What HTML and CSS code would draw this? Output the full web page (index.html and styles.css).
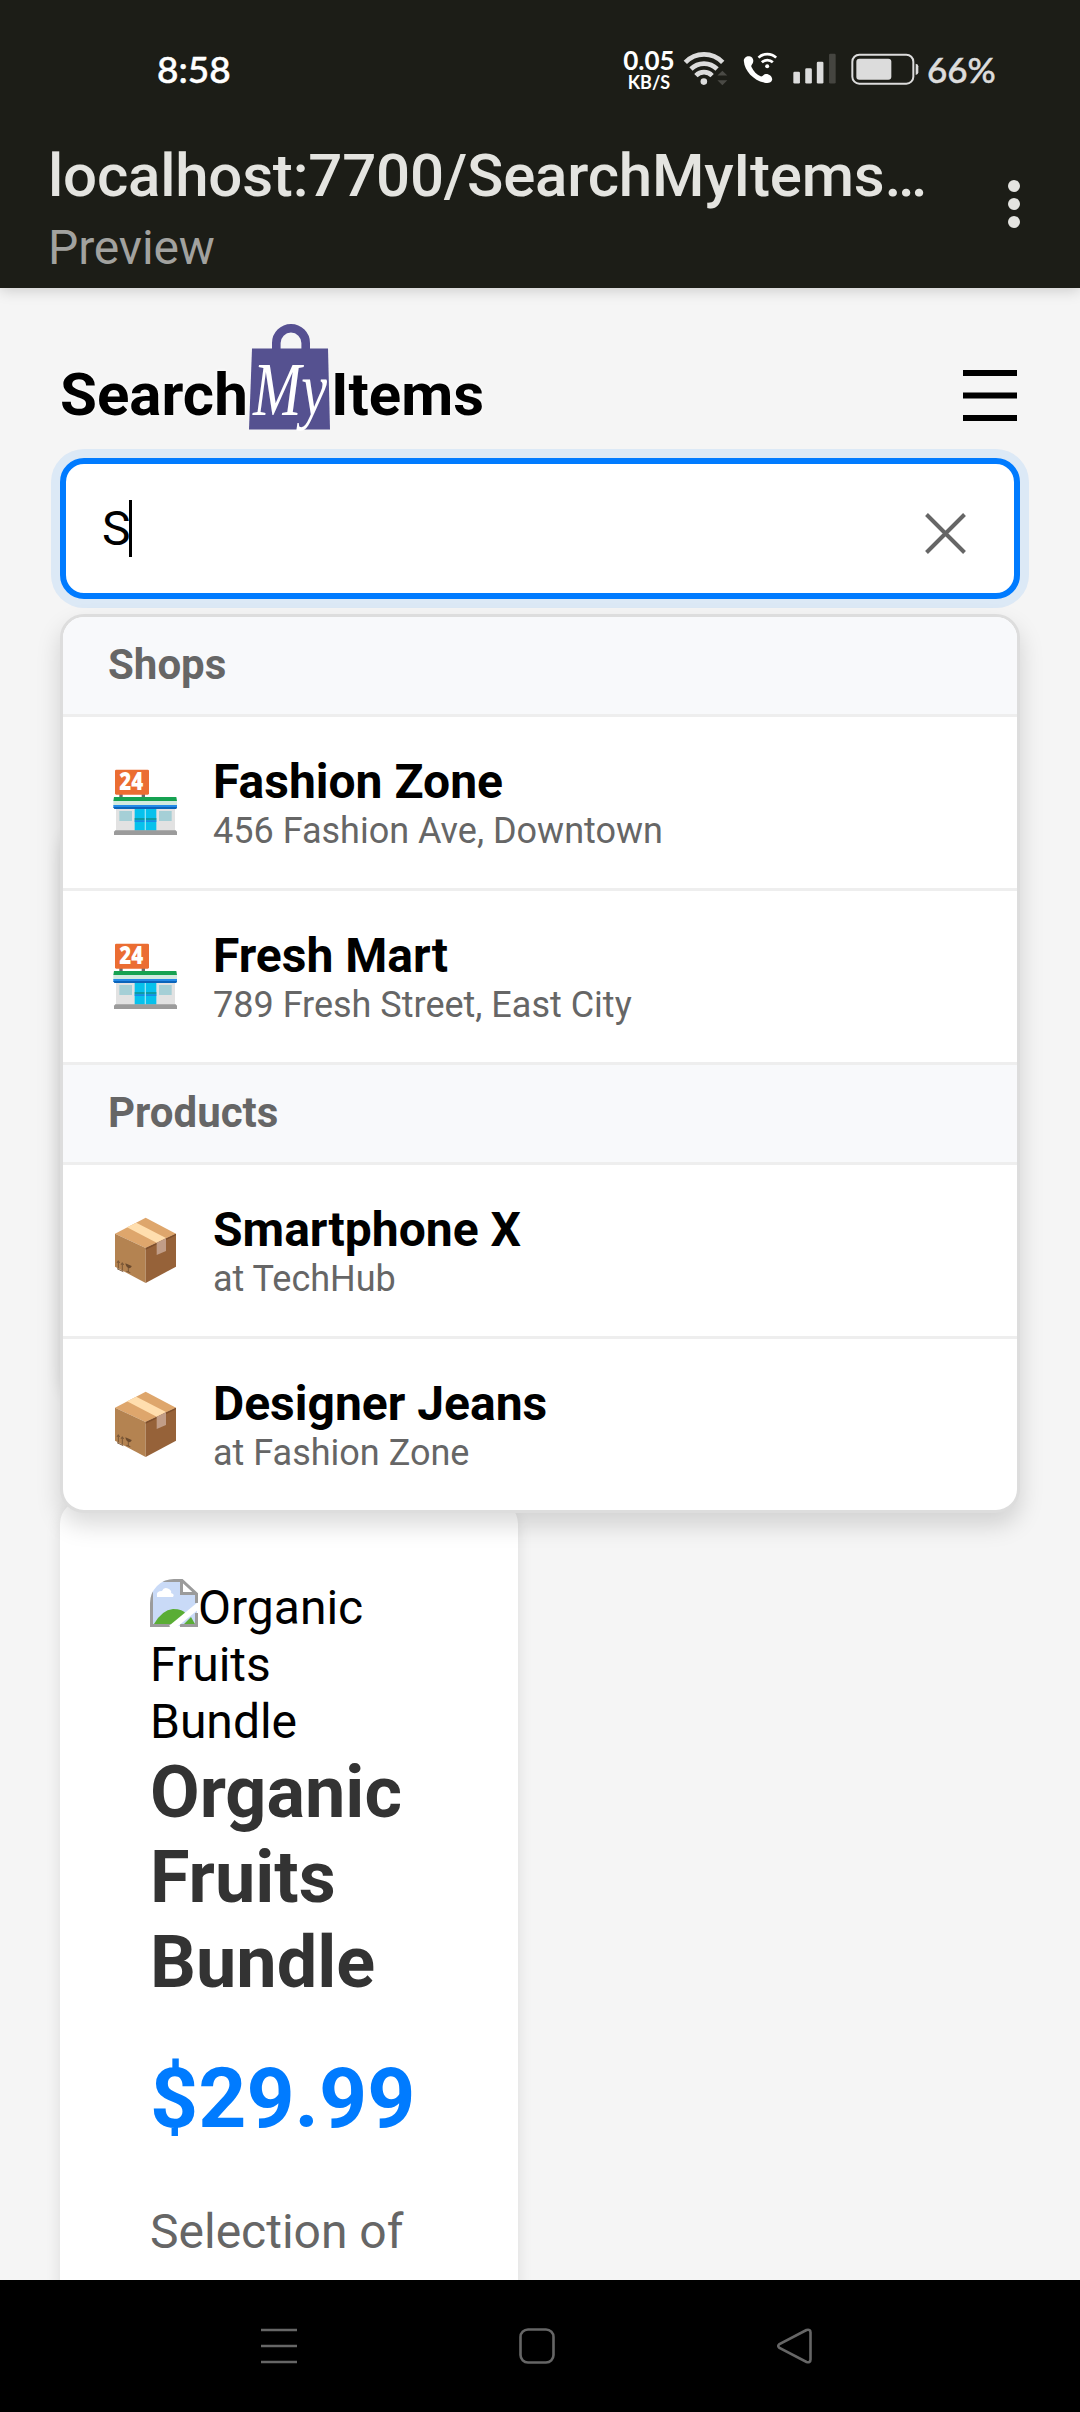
FILE: index.html
```html
<!DOCTYPE html>
<html lang="en">
<head>
<meta charset="utf-8">
<title>SearchMyItems</title>
<link rel="stylesheet" href="styles.css">
</head>
<body>
<svg class="defs" width="0" height="0" aria-hidden="true">
  <symbol id="store" viewBox="0 0 252 252">
    <path fill="#6b6b6b" d="M46 100h10v12H46zM113 100h10v12h-10z"/>
    <rect x="33" y="29" width="102" height="75" rx="4" fill="#eb6d32"/>
    <rect x="36" y="145" width="177" height="70" fill="#e2e2e2"/>
    <path fill="#a5cfd6" d="M46 153h38v30H46zM165 153h38v30h-38z"/>
    <path fill="#06c1ec" d="M92 146h65v66H92z"/>
    <path fill="#0e9ba5" d="M92 174h65v7H92z"/>
    <path fill="#188ce5" d="M92 181h65v5H92z"/>
    <path fill="#8fe4f7" d="M122 146h4v66h-4z"/>
    <path fill="#16a251" d="M30 111h187l2 12H28z"/>
    <path fill="#d3eadf" d="M28 123h191v14H28z"/>
    <path fill="#248be8" d="M28 135h191v9H28z"/>
    <path fill="#0b64ba" d="M28 141h191l-2 6H31z"/>
    <path fill="#9b9b9b" d="M34 211h181l4 4v10H30v-10z"/>
    <text x="46" y="91" class="sign" textLength="72" lengthAdjust="spacingAndGlyphs">24</text>
  </symbol>
  <symbol id="box" viewBox="0 0 252 252">
    <path fill="#dea66c" d="M125 35l91 48-91 43L33 83z"/>
    <path fill="#b48351" d="M33 83l92 43v105l-92-49z"/>
    <path fill="#966239" d="M216 83l-91 43v105l91-49z"/>
    <path fill="#7d4e2b" d="M125 126l91-43v5l-91 43z"/>
    <path fill="#ffdeae" d="M97 50l89 46-28 14L69 64z"/>
    <path fill="#c19d87" d="M186 97v38l-28 12v-37z"/>
    <path stroke="#7a5737" stroke-width="3" fill="none" d="M43 188v-23m-4 6l4-7 4 7M55 194v-23m-4 6l4-7 4 7M39 188l19 9M73 183v15m-6-2l12 4"/>
    <path fill="#6b4a2d" d="M64 172l19 8c-2 10-16 9-19-8z"/>
  </symbol>
</svg>

<header class="status">
  <span class="clock">8:58</span>
  <div class="speed"><span class="rate">0.05</span><span class="unit">KB/S</span></div>
  <svg class="wifi" viewBox="250 60 136 108">
    <g fill="none" stroke="#dcdcdc" stroke-width="14"><path d="M257 97A78 78 0 0 1 370 97M274 117A56 56 0 0 1 353 117M289 137A34 34 0 0 1 338 137"/></g>
    <circle cx="313" cy="155" r="10" fill="#dcdcdc"/>
    <path fill="#4a4a45" d="M369 122l15 15h-30zM369 166l15-15h-30z"/>
  </svg>
  <svg class="phone" viewBox="430 66 104 96">
    <path fill="#fff" d="M432 93C431 84 441 77 449 79C457 80 462 88 460 96C459 103 452 105 455 111C461 124 471 134 482 139C488 141 490 133 498 132C507 131 518 139 517 149C515 159 504 160 494 158C462 152 434 123 432 93Z"/>
    <g fill="none" stroke="#fff" stroke-width="8"><path d="M476 83A38 38 0 0 1 529 83M486 97A24 24 0 0 1 519 97"/></g>
    <circle cx="502" cy="109" r="6" fill="#fff"/>
  </svg>
  <svg class="signal" viewBox="579 70 130 93">
    <g fill="#dcdcdc"><rect x="580" y="126" width="20" height="36" rx="4"/><rect x="616" y="116" width="20" height="46" rx="4"/><rect x="651" y="96" width="20" height="66" rx="4"/></g>
    <rect x="688" y="72" width="20" height="90" rx="4" fill="#454540"/>
  </svg>
  <svg class="battery" viewBox="755 70 204 96">
    <rect x="759" y="75" width="183" height="87" rx="21" fill="none" stroke="#dcdcdc" stroke-width="6"/>
    <rect x="771" y="87" width="105" height="63" rx="9" fill="#dcdcdc"/>
    <path fill="#dcdcdc" d="M949 102q8 1 8 8v18q0 7-8 8z"/>
  </svg>
  <span class="percent">66%</span>
</header>

<div class="appbar">
  <div class="address">
    <div class="url">localhost:7700/SearchMyItems…</div>
    <div class="mode">Preview</div>
  </div>
  <svg class="more" viewBox="0 0 12 48"><g fill="#e4e4e0"><circle cx="6" cy="6" r="6"/><circle cx="6" cy="24" r="6"/><circle cx="6" cy="42" r="6"/></g></svg>
</div>

<main class="page">
  <div class="brandbar">
    <div class="brand">
      <span class="word search-word">Search</span>
      <svg class="bag" viewBox="0 0 82 106">
        <path fill="none" stroke="#565092" stroke-width="8.6" d="M27.300 26v-7a14.700 14.700 0 0 1 29.400 0v7"/>
        <path fill="#555190" d="M3 24.500h76l2 81H0z"/>
        <text x="4" y="91" class="my" textLength="74" lengthAdjust="spacingAndGlyphs">My</text>
      </svg>
      <span class="word">Items</span>
    </div>
    <svg class="menu" viewBox="0 0 54 52"><path d="M0 0h54v6H0zM0 22.500h54v6H0zM0 45h54v6H0z"/></svg>
  </div>

  <div class="searchbox">
    <span class="query">S</span><span class="caret"></span>
    <svg class="clear" viewBox="0 0 41 41"><path d="M1.500 1.500l38 38M39.500 1.500l-38 38" fill="none" stroke="#666" stroke-width="4"/></svg>
  </div>

  <div class="below">
    <section class="cards">
      <article class="card first"></article>
      <article class="card">
        <div class="photo"><svg class="broken" viewBox="0 0 48 48">
          <path fill="#c9daf7" d="M1 1h31v14h15v32H1z"/>
          <path fill="#fff" d="M7 17q-1-5 5-5 2-5 7-2 3 2 2 4 4 1 2 4H7z"/>
          <path fill="#5aad35" d="M4 45Q12 31 23 30q10 0 13 5l-15 11H4zM34 45l7-7 4 7z"/>
          <path fill="none" stroke="#9b9b9b" stroke-width="3" d="M1.500 48V1.500H32L46.500 15v9M31.500 1.500v13h15M0 46.500h21M30 46.500h16.500V34"/>
          <path stroke="#fff" stroke-width="6" d="M21 49L49 26"/>
        </svg>Organic<br>Fruits<br>Bundle</div>
        <h3 class="name">Organic<br>Fruits<br>Bundle</h3>
        <div class="price">$29.99</div>
        <p class="about">Selection of</p>
      </article>
    </section>

    <div class="suggestions">
      <div class="group">Shops</div>
      <div class="item"><svg class="emoji"><use href="#store"/></svg><div class="text"><div class="title">Fashion Zone</div><div class="sub">456 Fashion Ave, Downtown</div></div></div>
      <div class="item"><svg class="emoji"><use href="#store"/></svg><div class="text"><div class="title">Fresh Mart</div><div class="sub">789 Fresh Street, East City</div></div></div>
      <div class="group">Products</div>
      <div class="item"><svg class="emoji parcel"><use href="#box"/></svg><div class="text"><div class="title">Smartphone X</div><div class="sub">at TechHub</div></div></div>
      <div class="item"><svg class="emoji parcel"><use href="#box"/></svg><div class="text"><div class="title">Designer Jeans</div><div class="sub">at Fashion Zone</div></div></div>
    </div>
  </div>
</main>

<nav class="navbar">
  <svg class="recents" viewBox="0 0 36 36"><path d="M0 2h36M0 18h36M0 34h36"/></svg>
  <svg class="home" viewBox="0 0 36 36"><rect x="1.500" y="1.500" width="33" height="33" rx="7.500"/></svg>
  <svg class="back" viewBox="0 0 36 36"><path d="M29.500 2L2.500 16Q0 18 2.500 20L29.500 34Q33.500 35 33.500 31.500V4.500Q33.500 1 29.500 2z"/></svg>
</nav>
</body>
</html>
```
FILE: styles.css
```css
* { box-sizing: border-box; }
body {
  margin: 0;
  width: 1080px;
  height: 2412px;
  display: flex;
  flex-direction: column;
  overflow: hidden;
  background: #f5f5f5;
  font-family: Roboto, sans-serif;
  font-size: 48px;
  color: #000;
}
svg { display: block; flex: none; }
.defs { position: absolute; }

/* stacked above the app bar so its shadow stays off the status row */
.status {
  position: relative;
  z-index: 1;
  height: 136px;
  flex: none;
  display: flex;
  align-items: flex-start;
  background: #1c1d17;
  font-family: Lato, sans-serif;
  color: #fff;
}
.clock { width: 465px; margin: 47px 0 0 157px; font-size: 37px; line-height: 44px; font-weight: 500; -webkit-text-stroke: .5px; }
.speed { width: 54px; margin-top: 47px; display: flex; flex-direction: column; align-items: center; font-weight: 700; }
.rate { font-size: 26px; line-height: 26px; }
.unit { font-size: 18px; line-height: 18px; }
.wifi { width: 45px; height: 36px; margin: 50px 0 0 7px; }
.phone { width: 35px; height: 32px; margin: 52px 0 0 15px; }
.signal { width: 43px; height: 31px; margin: 53px 0 0 15px; }
.battery { width: 68px; height: 32px; margin: 53px 0 0 15px; }
.percent { margin: 47px 0 0 8px; font-size: 35px; line-height: 44px; font-weight: 500; color: #dcdcdc; -webkit-text-stroke: .5px; }

.appbar {
  height: 152px;
  flex: none;
  padding: 5px 60px 0 48px;
  display: flex;
  justify-content: space-between;
  background: #1c1d17;
  box-shadow: 0 2px 14px rgba(0, 0, 0, .18);
  position: relative;
  white-space: nowrap;
}
.url { font-size: 60px; line-height: 70px; font-weight: 500; letter-spacing: -.21px; color: #e4e4e0; }
.mode { font-size: 48px; line-height: 56px; margin-top: 9px; letter-spacing: -.15px; color: #a2a29f; }
.more { width: 12px; height: 48px; margin-top: 39px; }

.page { height: 1992px; flex: none; padding: 0 60px; overflow: hidden; }
.brandbar { height: 170px; display: flex; justify-content: space-between; }
.brand { display: flex; align-items: flex-start; }
.word { font-size: 60px; line-height: 70px; font-weight: 700; margin-top: 72px; text-shadow: 0 0 5px #fff; }
.search-word { width: 189px; }
.bag { width: 82px; height: 106px; margin: 36px 0 0; overflow: visible; }
.my { font-family: "Liberation Serif", serif; font-style: italic; font-size: 76px; fill: #fff; }
.menu { width: 54px; height: 52px; margin: 82px 3px 0 0; }

.searchbox {
  height: 141px;
  padding: 0 48px 0 36px;
  display: flex;
  align-items: center;
  background: #fff;
  border: 6px solid #007bff;
  border-radius: 24px;
  box-shadow: 0 0 0 9px rgba(0, 123, 255, .1);
}
.query { width: 27px; line-height: 56px; }
.caret { width: 3px; height: 57px; background: #000; }
.clear { width: 41px; height: 41px; margin: 9px 0 0 auto; }

.below { position: relative; }
.cards { display: flex; flex-direction: column; width: 458px; gap: 106px; padding-top: 225px; }
.card {
  height: 1000px;
  padding: 79px 0 0 90px;
  background: #fff;
  border-radius: 24px;
  box-shadow: 0 6px 15px rgba(0, 0, 0, .1);
}
.first { height: 570px; padding: 0; }
.photo { height: 171px; line-height: 57px; white-space: nowrap; }
.broken { display: inline-block; width: 48px; height: 48px; border-radius: 24px 0 0; vertical-align: -3px; }
.name { margin: 0; font-size: 72px; line-height: 85px; color: #333; }
.price { margin-top: 45px; font-size: 84px; line-height: 98px; font-weight: 700; color: #007bff; }
.about { margin: 49px 0 0; font-size: 48px; line-height: 70px; color: #666; }

.suggestions {
  position: absolute;
  top: 15px;
  left: 0;
  width: 960px;
  background: #fff;
  border: 3px solid #ddd;
  border-radius: 24px;
  overflow: hidden;
  box-shadow: 0 12px 24px rgba(0, 0, 0, .15);
}
.group {
  height: 100px;
  padding: 23px 45px;
  font-size: 42px;
  line-height: 49px;
  font-weight: 700;
  color: #666;
  background: #f8f9fb;
  border-bottom: 3px solid #eee;
}
.item { height: 174px; padding: 36px 0 0 41px; display: flex; gap: 25px; border-bottom: 3px solid #eee; }
.item:last-child { height: 171px; border-bottom: 0; }
.emoji { width: 84px; height: 84px; margin-top: 7px; }
.parcel { margin-top: 5px; }
.sign { font-family: "Open Sans", sans-serif; font-weight: 800; font-size: 74px; fill: #fff; }
.text { padding-top: 1px; }
.title { line-height: 56px; font-weight: 700; }
.sub { font-size: 36px; line-height: 42px; color: #666; }

.navbar {
  height: 132px;
  flex: none;
  padding: 0 267px 0 261px;
  display: flex;
  align-items: center;
  justify-content: space-between;
  background: #000;
}
.navbar svg { width: 36px; height: 36px; fill: none; stroke: #666; stroke-width: 2.600px; }
```
